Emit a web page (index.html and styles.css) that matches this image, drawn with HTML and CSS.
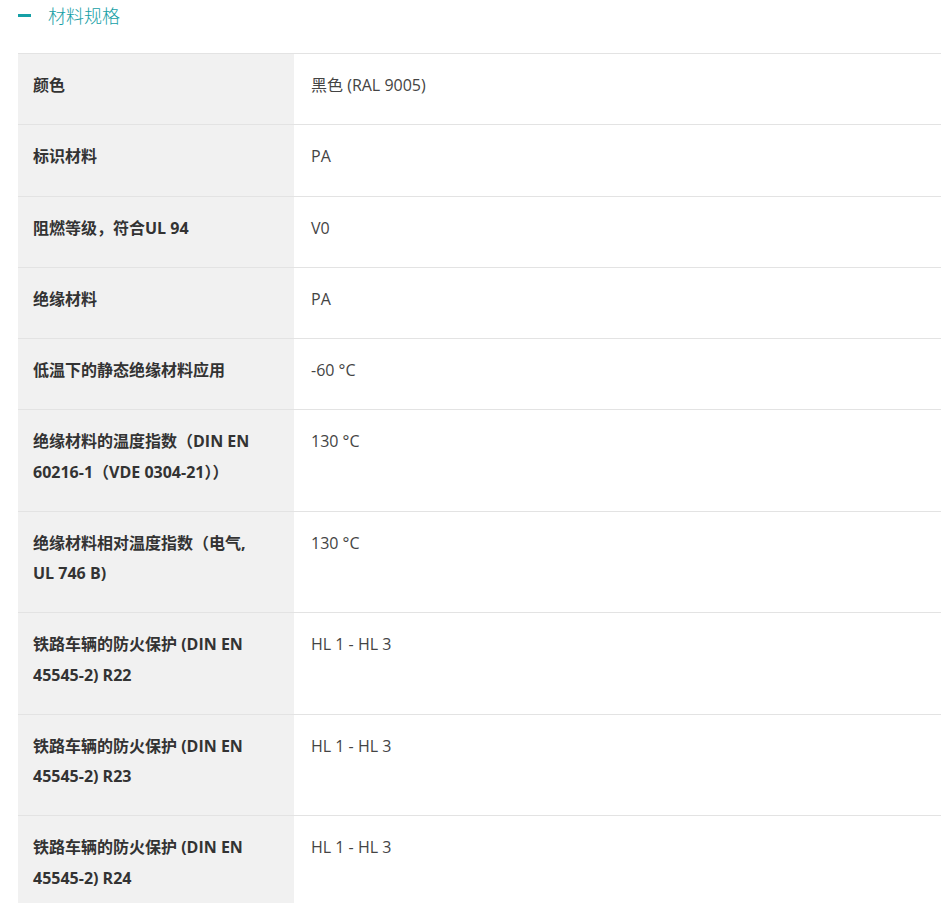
FILE: index.html
```html
<!DOCTYPE html>
<html lang="zh">
<head>
<meta charset="utf-8">
<link rel="stylesheet" href="styles.css">
</head>
<body>
<div class="section">
  <div class="head">
    <span class="minus"></span>
    <span class="title">材料规格</span>
  </div>
  <div class="table">
    <div class="row"><div class="k">颜色</div><div class="v">黑色 (RAL 9005)</div></div>
    <div class="row"><div class="k">标识材料</div><div class="v">PA</div></div>
    <div class="row"><div class="k">阻燃等级，符合UL 94</div><div class="v">V0</div></div>
    <div class="row"><div class="k">绝缘材料</div><div class="v">PA</div></div>
    <div class="row"><div class="k">低温下的静态绝缘材料应用</div><div class="v">-60 °C</div></div>
    <div class="row"><div class="k">绝缘材料的温度指数（DIN EN 60216-1（VDE 0304-21））</div><div class="v">130 °C</div></div>
    <div class="row"><div class="k">绝缘材料相对温度指数（电气, UL 746 B)</div><div class="v">130 °C</div></div>
    <div class="row"><div class="k">铁路车辆的防火保护 (DIN EN 45545-2) R22</div><div class="v">HL 1 - HL 3</div></div>
    <div class="row"><div class="k">铁路车辆的防火保护 (DIN EN 45545-2) R23</div><div class="v">HL 1 - HL 3</div></div>
    <div class="row"><div class="k">铁路车辆的防火保护 (DIN EN 45545-2) R24</div><div class="v">HL 1 - HL 3</div></div>
  </div>
</div>
</body>
</html>
```
FILE: styles.css
```css
html, body {
  margin: 0;
  padding: 0;
  background: #fff;
}
body {
  font-family: "Open Sans", "Noto Sans CJK SC", sans-serif;
  color: #333;
}
.section {
  padding: 0 11px 0 18px;
}
.head {
  display: flex;
  align-items: center;
  height: 30px;
  margin-bottom: 23px;
}
.minus {
  display: block;
  width: 13px;
  height: 3px;
  background: #16a0a6;
  margin-right: 17px;
}
.title {
  font-family: "Noto Sans CJK SC", sans-serif;
  font-size: 18px;
  font-weight: 300;
  color: #16a0a6;
  line-height: 30px;
}
.table {
  border-top: 1px solid #e3e3e3;
}
.row {
  display: grid;
  grid-template-columns: 276px 1fr;
  border-bottom: 1px solid #e3e3e3;
}
.k {
  background: #f1f1f1;
  padding: 16px 25px 24px 15px;
  font-size: 16px;
  font-weight: 700;
  line-height: 30.25px;
  color: #333;
}
.v {
  padding: 16px 17px 24px;
  font-size: 16px;
  line-height: 30.25px;
  color: #444;
}
```
